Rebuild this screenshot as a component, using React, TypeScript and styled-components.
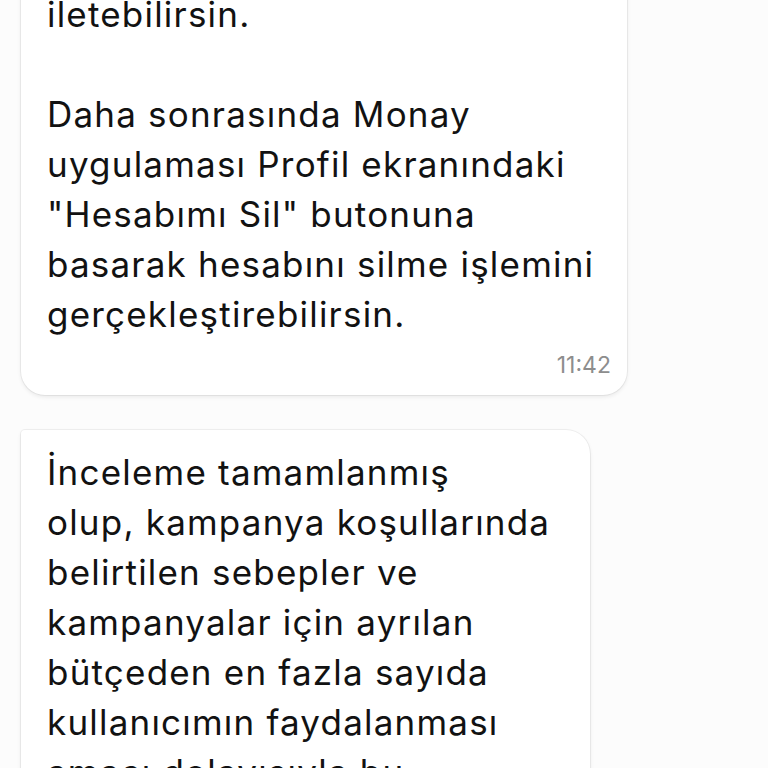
import React from 'react';
import styled, { createGlobalStyle } from 'styled-components';

const GlobalStyle = createGlobalStyle`
  html, body {
    margin: 0;
    padding: 0;
    background: #fcfcfc;
    overflow: hidden;
  }
  body {
    font-family: 'Inter', 'Open Sans', 'Liberation Sans', sans-serif;
    color: #121212;
  }
`;

const ChatList = styled.div`
  display: flex;
  flex-direction: column;
  align-items: flex-start;
  gap: 35px;
  padding: 0 21px;
  margin-top: -28px;
  height: 796px;
  overflow: hidden;
`;

const Bubble = styled.div<{ $width: number; $first?: boolean }>`
  box-sizing: border-box;
  width: ${(p) => p.$width}px;
  background: #ffffff;
  border-radius: ${(p) => (p.$first ? '4px 24px 24px 24px' : '24px')};
  box-shadow: 0 0 0 1px rgba(0, 0, 0, 0.05), 0 2px 4px rgba(0, 0, 0, 0.08);
  padding: 17px 16px 15px 26px;
  flex-shrink: 0;
`;

const MessageText = styled.p`
  margin: 0;
  font-size: 35px;
  line-height: 50px;
  white-space: pre-line;
  letter-spacing: 1.2px;
`;

const Time = styled.div`
  text-align: right;
  font-size: 23px;
  line-height: 30px;
  color: #8d8d8d;
  margin-top: 11px;
`;

const messages = [
  {
    id: 1,
    text: 'iletebilirsin.\n\nDaha sonrasında Monay\nuygulaması Profil ekranındaki\n"Hesabımı Sil" butonuna\nbasarak hesabını silme işlemini\ngerçekleştirebilirsin.',
    time: '11:42',
    width: 606,
  },
  {
    id: 2,
    text: 'İnceleme tamamlanmış\nolup, kampanya koşullarında\nbelirtilen sebepler ve\nkampanyalar için ayrılan\nbütçeden en fazla sayıda\nkullanıcımın faydalanması\namacı dolayısıyla bu\nkampanyadan yararlanamadığını\nbelirtmek isteriz.',
    time: '11:43',
    width: 569,
    first: true,
  },
];

export default function App() {
  return (
    <>
      <GlobalStyle />
      <ChatList>
        {messages.map((m) => (
          <Bubble key={m.id} $width={m.width} $first={m.first}>
            <MessageText>{m.text}</MessageText>
            <Time>{m.time}</Time>
          </Bubble>
        ))}
      </ChatList>
    </>
  );
}
